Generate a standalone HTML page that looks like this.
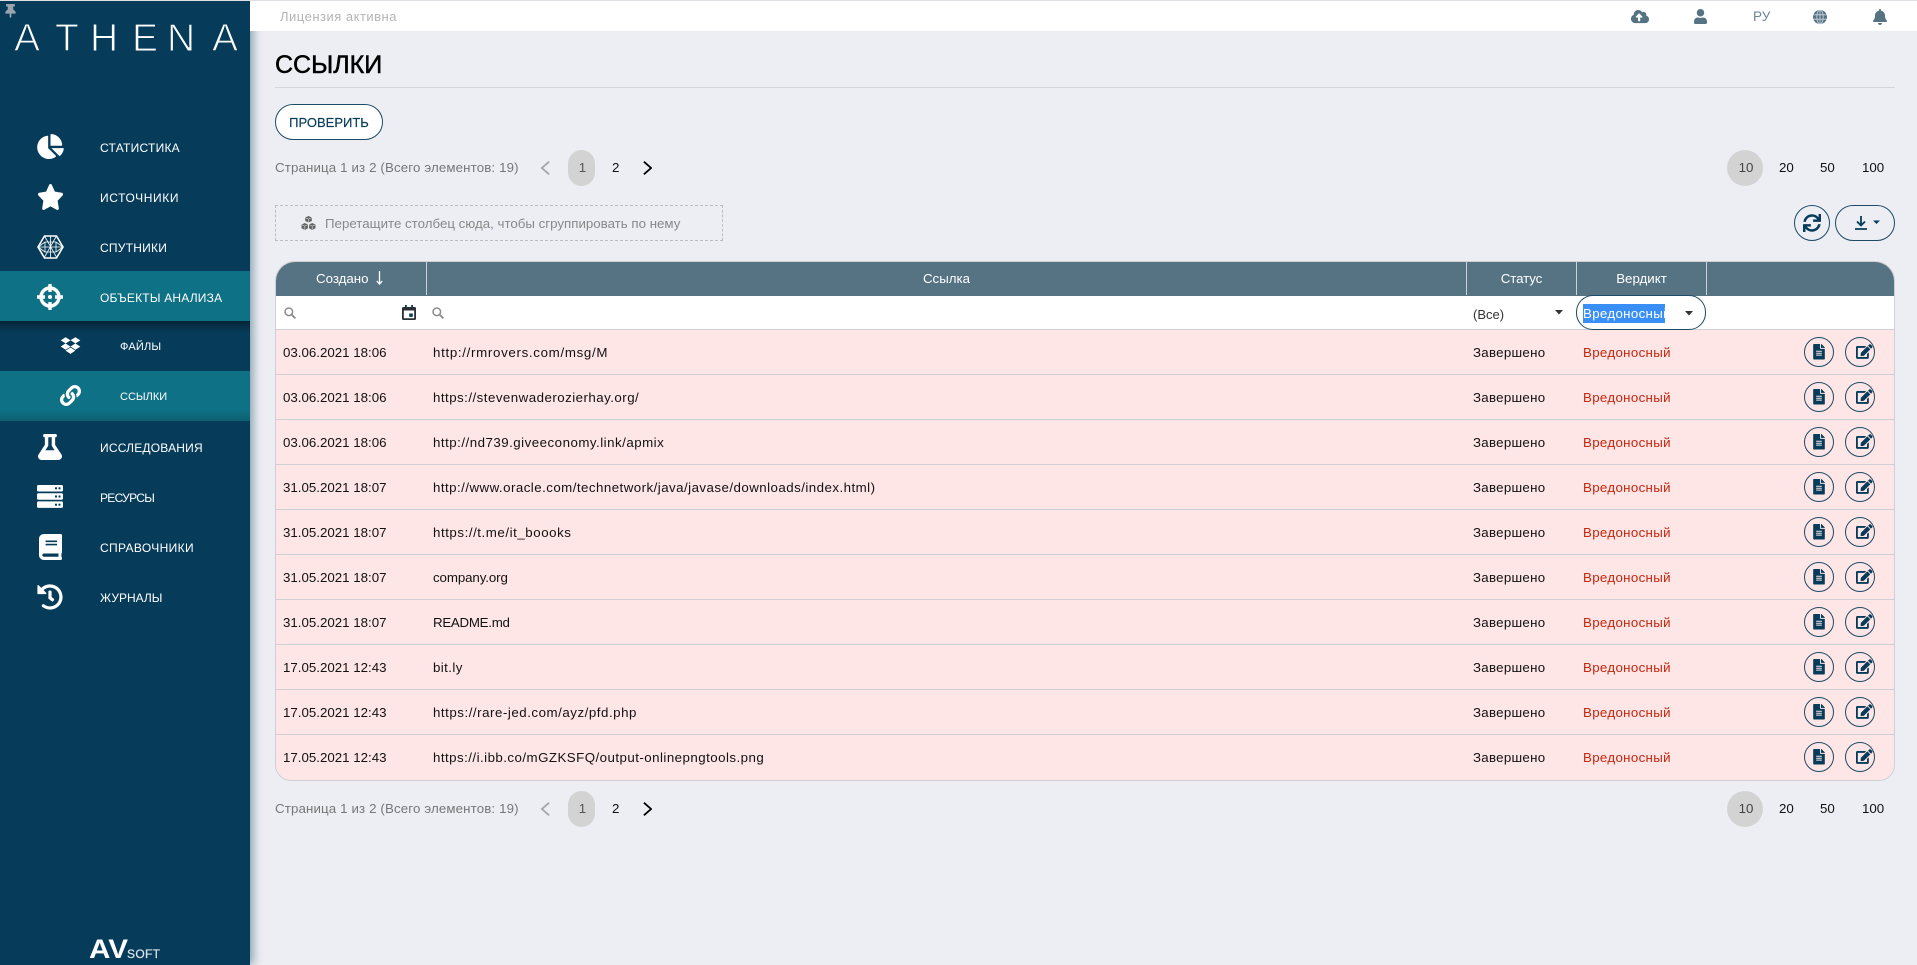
<!DOCTYPE html>
<html lang="ru"><head><meta charset="utf-8"><title>Ссылки</title>
<style>
*{box-sizing:border-box}
html,body{margin:0;padding:0;width:1917px;height:965px;overflow:hidden;background:#edeef3;font-family:"Liberation Sans",sans-serif;font-size:13.3px;color:#111}
.a{position:absolute;white-space:nowrap}
svg{display:block;position:absolute;overflow:visible}
#side{position:absolute;left:0;top:1px;width:250px;height:964px;background:#063c5a;box-shadow:3px 0 9px rgba(6,60,90,.45);z-index:1}
.nav{position:absolute;left:0;width:250px;height:50px;color:#fff;font-size:12px;line-height:52px}
.nav span{position:absolute;left:100px}
.nav.sub{font-size:11px}
.nav.sub span{left:120px}
#top{position:absolute;left:250px;top:1px;width:1667px;height:30px;background:#fff;z-index:2}
.pager{color:#777;letter-spacing:.13px}
.pill{position:absolute;background:#d3d3d3;border-radius:18px}
.row{position:absolute;left:276px;width:1618px;height:45px;background:#fee6e6;border-bottom:1px solid #cfd0d4;line-height:46px}
.row span{position:absolute;white-space:nowrap}
.d{left:7px}.u{left:157px;letter-spacing:.47px}.s{left:1197px;letter-spacing:.27px}.v{left:1307px;color:#c4260e;letter-spacing:.33px}
.b{position:absolute;top:7px;width:30px;height:30px;border:1px solid #1d4a66;border-radius:50%;background:transparent}
.b1{left:1528px}.b2{left:1569px}
.th{color:#fff;line-height:36px;text-align:center;top:261px;height:34px}
</style></head><body>
<svg width="0" height="0" style="position:absolute"><defs>
<symbol id="file" viewBox="0 0 384 512"><path d="M224 136V0H24C10.7 0 0 10.7 0 24v464c0 13.3 10.7 24 24 24h336c13.3 0 24-10.7 24-24V160H248c-13.2 0-24-10.8-24-24zm64 236c0 6.6-5.4 12-12 12H108c-6.6 0-12-5.4-12-12v-8c0-6.6 5.4-12 12-12h168c6.6 0 12 5.4 12 12v8zm0-64c0 6.6-5.4 12-12 12H108c-6.6 0-12-5.4-12-12v-8c0-6.6 5.4-12 12-12h168c6.6 0 12 5.4 12 12v8zm0-72v8c0 6.6-5.4 12-12 12H108c-6.6 0-12-5.4-12-12v-8c0-6.6 5.4-12 12-12h168c6.6 0 12 5.4 12 12zm96-114.1v6.1H256V0h6.1c6.4 0 12.5 2.5 17 7l97.9 98c4.5 4.5 7 10.6 7 16.9z"/></symbol>
<symbol id="edit" viewBox="0 0 576 512"><path d="M402.6 83.2l90.2 90.2c3.8 3.8 3.8 10 0 13.8L274.4 405.6l-92.8 10.3c-12.4 1.4-22.9-9.1-21.5-21.5l10.3-92.8L388.8 83.2c3.8-3.8 10-3.8 13.8 0zm162-22.9l-48.8-48.8c-15.2-15.2-39.9-15.2-55.2 0l-35.4 35.4c-3.8 3.8-3.8 10 0 13.8l90.2 90.2c3.8 3.8 10 3.8 13.8 0l35.4-35.4c15.2-15.3 15.2-40 0-55.2zM384 346.2V448H64V128h229.8c3.2 0 6.2-1.3 8.5-3.5l40-40c7.6-7.6 2.2-20.5-8.5-20.5H48C21.5 64 0 85.5 0 112v352c0 26.5 21.500 48 48 48h352c26.500 0 48-21.500 48-48V306.200c0-10.700-12.900-16-20.500-8.500l-40 40c-2.200 2.300-3.500 5.300-3.500 8.500z"/></symbol>
<symbol id="acts" viewBox="0 0 71 30"><use href="#file" x="9" y="7" width="12" height="15.500" fill="#063c5a"/><use href="#edit" x="52" y="7" width="16.500" height="15" fill="#063c5a"/></symbol>
<symbol id="search" viewBox="0 0 12 12"><circle cx="4.8" cy="4.8" r="3.8" fill="none" stroke="#8b8b8b" stroke-width="1.5"/><path d="M7.6 7.6L11.4 11.4" stroke="#8b8b8b" stroke-width="1.8"/></symbol>
<symbol id="chev" viewBox="0 0 10 16"><path d="M1 1l8 7-8 7" fill="none" stroke="currentColor" stroke-width="2"/></symbol>
</defs></svg>

<div style="position:absolute;left:0;top:0;width:1917px;height:1px;background:#dfdfe3;z-index:3"></div>

<div id="side"></div>
<div style="position:absolute;left:0;top:0;width:250px;height:965px;z-index:2">
  <svg style="left:5px;top:4px" width="11" height="14" viewBox="0 0 384 512" fill="#9aa5ad"><path d="M298.028 214.267L285.793 96H328c13.255 0 24-10.745 24-24V24c0-13.255-10.745-24-24-24H56C42.745 0 32 10.745 32 24v48c0 13.255 10.745 24 24 24h42.207L85.972 214.267C37.465 236.82 0 277.261 0 328c0 13.255 10.745 24 24 24h136v104.007c0 1.242.289 2.467.845 3.578l24 48c2.941 5.882 11.364 5.893 14.311 0l24-48a8.008 8.008 0 0 0 .845-3.578V352h136c13.255 0 24-10.745 24-24-.001-51.183-37.983-91.42-85.973-113.733z"/></svg>
  <svg style="left:0;top:0" width="250" height="60"><text x="14 55 90 132 167 212" y="51" font-family="Liberation Sans" font-size="39" fill="#fff" stroke="#063c5a" stroke-width="1.100">ATHENA</text></svg>

  <div style="position:absolute;left:0;top:271px;width:250px;height:50px;background:#0e7186"></div>
  <div style="position:absolute;left:0;top:321px;width:250px;height:12px;background:linear-gradient(#052438,#063c5a)"></div>
  <div style="position:absolute;left:0;top:371px;width:250px;height:50px;background:linear-gradient(#0e7186 78%,#0d5f6e)"></div>

  <div class="nav" style="top:122px"><span style="letter-spacing:.25px">СТАТИСТИКА</span></div>
  <svg style="left:37px;top:134px" width="27" height="25" viewBox="0 0 544 512" fill="#fff"><path d="M527.79 288H290.5l158.03 158.03c6.04 6.04 15.98 6.53 22.19.68 38.7-36.46 65.32-85.61 73.13-140.86 1.34-9.46-6.51-17.85-16.06-17.85zm-15.83-64.8C503.72 103.74 408.26 8.28 288.8.04 279.68-.59 272 7.1 272 16.24V240h223.77c9.14 0 16.82-7.68 16.19-16.8zM224 288V50.71c0-9.55-8.39-17.4-17.84-16.06C86.99 51.49-4.1 155.6.14 280.37 4.5 408.51 114.83 513.59 243.03 511.98c50.4-.63 96.97-16.87 135.26-44.03 7.9-5.6 8.42-17.23 1.57-24.08L224 288z"/></svg>

  <div class="nav" style="top:172px"><span style="letter-spacing:.6px">ИСТОЧНИКИ</span></div>
  <svg style="left:37px;top:184px" width="27" height="26" viewBox="0 0 576 512" preserveAspectRatio="none" fill="#fff"><path d="M259.3 17.8L194 150.2 47.9 171.5c-26.2 3.8-36.7 36.1-17.7 54.6l105.7 103-25 145.5c-4.5 26.3 23.2 46 46.4 33.7L288 439.6l130.7 68.7c23.2 12.2 50.9-7.4 46.4-33.7l-25-145.5 105.7-103c19-18.5 8.5-50.8-17.7-54.6L382 150.2 316.7 17.8c-11.7-23.6-45.6-23.9-57.4 0z"/></svg>

  <div class="nav" style="top:222px"><span style="letter-spacing:.25px">СПУТНИКИ</span></div>
  <svg style="left:37px;top:235px" width="27" height="24" viewBox="0 0 27 24" fill="none" stroke="#fff"><path d="M1 12L7.5 1h12L26 12l-6.500 11h-12z" stroke-width="1.6"/><path d="M7.500 1L20 23M19.500 1L7 23M1 12l7-5h11l7 5-7 5H8zM8 7v10M19 7v10M1 12h25M13.500 1v22" stroke-width=".8"/></svg>

  <div class="nav" style="top:272px"><span style="letter-spacing:.2px">ОБЪЕКТЫ АНАЛИЗА</span></div>
  <svg style="left:37px;top:284px" width="26" height="26" viewBox="0 0 26 26" fill="none" stroke="#fff"><circle cx="13" cy="13" r="9" stroke-width="3.400"/><circle cx="13" cy="13" r="2" fill="#fff" stroke="none"/><path d="M13 0v8M13 18v8M0 13h8M18 13h8" stroke-width="3.400"/></svg>

  <div class="nav sub" style="top:321px"><span style="letter-spacing:.2px">ФАЙЛЫ</span></div>
  <svg style="left:60px;top:336px" width="21" height="19" viewBox="0 0 528 512" fill="#fff"><path d="M264.4 116.3l-132 84.3 132 84.3-132 84.3L0 284.1l132.300-84.300L0 116.300 132.300 32l132.100 84.300zM131.600 395.700l132-84.300 132 84.300-132 84.300-132-84.300zm132.800-111.600l132-84.300-132-83.600L395.700 32 528 116.300l-132.300 84.300L528 284.800l-132.300 84.300-131.300-85z"/></svg>

  <div class="nav sub" style="top:371px"><span>ССЫЛКИ</span></div>
  <svg style="left:60px;top:385px" width="21" height="21" viewBox="0 0 512 512" fill="#fff"><path d="M326.612 185.391c59.747 59.809 58.927 155.698.36 214.59-.11.12-.24.25-.36.37l-67.2 67.2c-59.27 59.27-155.699 59.262-214.96 0-59.27-59.26-59.27-155.7 0-214.96l37.106-37.106c9.84-9.84 26.786-3.3 27.294 10.606.648 17.722 3.826 35.527 9.69 52.721 1.986 5.822.567 12.262-3.783 16.612l-13.087 13.087c-28.026 28.026-28.905 73.66-1.155 101.96 28.024 28.579 74.086 28.749 102.325.51l67.2-67.19c28.191-28.191 28.073-73.757 0-101.83-3.701-3.694-7.429-6.564-10.341-8.569a16.037 16.037 0 0 1-6.947-12.606c-.396-10.567 3.348-21.456 11.698-29.806l21.054-21.055c5.521-5.521 14.182-6.199 20.584-1.731a152.482 152.482 0 0 1 20.522 17.197zM467.547 44.449c-59.261-59.262-155.69-59.27-214.96 0l-67.2 67.2c-.12.12-.25.25-.36.37-58.566 58.892-59.387 154.781.36 214.59a152.454 152.454 0 0 0 20.521 17.196c6.402 4.468 15.064 3.789 20.584-1.731l21.054-21.055c8.35-8.35 12.094-19.239 11.698-29.806a16.037 16.037 0 0 0-6.947-12.606c-2.912-2.005-6.64-4.875-10.341-8.569-28.073-28.073-28.191-73.639 0-101.83l67.2-67.19c28.239-28.239 74.3-28.069 102.325.51 27.75 28.3 26.872 73.934-1.155 101.96l-13.087 13.087c-4.35 4.35-5.769 10.79-3.783 16.612 5.864 17.194 9.042 34.999 9.69 52.721.509 13.906 17.454 20.446 27.294 10.606l37.106-37.106c59.271-59.259 59.271-155.699.001-214.959z"/></svg>

  <div class="nav" style="top:422px"><span style="letter-spacing:.2px">ИССЛЕДОВАНИЯ</span></div>
  <svg style="left:38px;top:434px" width="24" height="26" viewBox="0 0 448 512" preserveAspectRatio="none" fill="#fff"><path d="M437.2 403.5L320 215V64h8c13.3 0 24-10.7 24-24V24c0-13.3-10.7-24-24-24H120c-13.3 0-24 10.700-24 24v16c0 13.300 10.700 24 24 24h8v151L10.800 403.500C-18.500 450.600 15.300 512 70.900 512h306.200c55.700 0 89.400-61.500 60.100-108.500zM137.900 320l48.200-77.600c3.700-5.200 5.800-11.600 5.800-18.400V64h64v160c0 6.900 2.200 13.200 5.800 18.400l48.200 77.600h-172z"/></svg>

  <div class="nav" style="top:472px"><span style="letter-spacing:-.7px">РЕСУРСЫ</span></div>
  <svg style="left:37px;top:485px" width="26" height="23" viewBox="0 0 26 23"><rect width="26" height="6.500" rx="1.500" fill="#fff"/><rect y="8.200" width="26" height="6.500" rx="1.500" fill="#fff"/><rect y="16.400" width="26" height="6.500" rx="1.500" fill="#fff"/><g fill="#063c5a"><rect x="18" y="2.300" width="2" height="2"/><rect x="21.500" y="2.300" width="2" height="2"/><rect x="18" y="10.500" width="2" height="2"/><rect x="21.500" y="10.500" width="2" height="2"/><rect x="18" y="18.700" width="2" height="2"/><rect x="21.500" y="18.700" width="2" height="2"/></g></svg>

  <div class="nav" style="top:522px"><span style="letter-spacing:.35px">СПРАВОЧНИКИ</span></div>
  <svg style="left:39px;top:534px" width="23" height="26" viewBox="0 0 448 512" preserveAspectRatio="none" fill="#fff"><path d="M448 360V24c0-13.300-10.700-24-24-24H96C43 0 0 43 0 96v320c0 53 43 96 96 96h328c13.300 0 24-10.700 24-24v-16c0-7.500-3.500-14.300-8.900-18.700-4.200-15.400-4.200-59.300 0-74.700 5.400-4.300 8.900-11.100 8.900-18.600zM128 134c0-3.300 2.700-6 6-6h212c3.300 0 6 2.700 6 6v20c0 3.300-2.700 6-6 6H134c-3.300 0-6-2.700-6-6v-20zm0 64c0-3.300 2.700-6 6-6h212c3.300 0 6 2.700 6 6v20c0 3.300-2.700 6-6 6H134c-3.300 0-6-2.700-6-6v-20zm253.400 250H96c-17.700 0-32-14.300-32-32 0-17.600 14.400-32 32-32h285.400c-1.900 17.100-1.900 46.900 0 64z"/></svg>

  <div class="nav" style="top:572px"><span>ЖУРНАЛЫ</span></div>
  <svg style="left:37px;top:584px" width="26" height="26" viewBox="0 0 512 512" fill="#fff"><path d="M504 255.531c.253 136.640-111.180 248.372-247.820 248.468-59.015.042-113.223-20.530-155.822-54.911-11.077-8.940-11.905-25.541-1.839-35.607l11.267-11.267c8.609-8.609 22.353-9.551 31.891-1.984C173.062 425.135 212.781 440 256 440c101.705 0 184-82.311 184-184 0-101.705-82.311-184-184-184-48.814 0-93.149 18.969-126.068 49.932l50.754 50.754c10.080 10.080 2.941 27.314-11.313 27.314H24c-8.837 0-16-7.163-16-16V38.627c0-14.254 17.234-21.393 27.314-11.314l49.372 49.372C129.209 34.136 189.552 8 256 8c136.810 0 247.747 110.780 248 247.531zm-180.912 78.784l9.823-12.630c8.138-10.463 6.253-25.542-4.210-33.679L288 256.349V152c0-13.255-10.745-24-24-24h-16c-13.255 0-24 10.745-24 24v135.651l65.409 50.874c10.463 8.137 25.541 6.253 33.679-4.210z"/></svg>

  <svg style="left:0;top:930px" width="250" height="35"><text x="89" y="28" font-family="Liberation Sans" font-size="27" font-weight="bold" fill="#fff" textLength="39" lengthAdjust="spacingAndGlyphs">AV</text><text x="127" y="28" font-family="Liberation Sans" font-size="12" fill="#dfe6eb" stroke="#dfe6eb" stroke-width=".2" textLength="33">SOFT</text></svg>
</div>

<div id="top">
  <div class="a" style="left:30px;top:0;line-height:31px;font-size:13px;color:#b4b4b4;letter-spacing:.5px">Лицензия активна</div>
  <svg style="left:1381px;top:8px" width="18" height="15" viewBox="0 0 640 512" preserveAspectRatio="none" fill="#567384"><path d="M537.600 226.600c4.100-10.700 6.400-22.400 6.400-34.600 0-53-43-96-96-96-19.700 0-38.100 6-53.300 16.200C367 64.200 315.300 32 256 32c-88.400 0-160 71.600-160 160 0 2.700.100 5.400.200 8.100C40.200 219.800 0 273.200 0 336c0 79.500 64.500 144 144 144h368c70.700 0 128-57.300 128-128 0-61.900-44-113.600-102.400-125.400zM393.400 288H328v112c0 8.800-7.200 16-16 16h-48c-8.800 0-16-7.200-16-16V288h-65.400c-14.300 0-21.400-17.200-11.300-27.300l105.400-105.400c6.200-6.200 16.400-6.200 22.600 0l105.400 105.400c10.100 10.100 2.900 27.300-11.300 27.300z"/></svg>
  <svg style="left:1444px;top:8px" width="13" height="15" viewBox="0 0 448 512" preserveAspectRatio="none" fill="#567384"><path d="M224 256c70.700 0 128-57.300 128-128S294.700 0 224 0 96 57.300 96 128s57.300 128 128 128zm89.600 32h-16.700c-22.200 10.200-46.900 16-72.900 16s-50.600-5.800-72.900-16h-16.700C60.200 288 0 348.200 0 422.400V464c0 26.500 21.500 48 48 48h352c26.500 0 48-21.500 48-48v-41.600c0-74.200-60.200-134.400-134.400-134.400z"/></svg>
  <div class="a" style="left:1503px;top:0;line-height:31px;font-size:13.5px;color:#6b8496">РУ</div>
  <svg style="left:1563px;top:9px" width="14" height="14" viewBox="0 0 14 14"><circle cx="7" cy="7" r="7" fill="#567384"/><path d="M0 4.800h14M0 9.200h14M7 0v14" stroke="#cfd8de" stroke-width=".8"/><ellipse cx="7" cy="7" rx="3.200" ry="7" fill="none" stroke="#cfd8de" stroke-width=".8"/></svg>
  <svg style="left:1623px;top:8px" width="14" height="16" viewBox="0 0 448 512" preserveAspectRatio="none" fill="#567384"><path d="M224 512c35.320 0 63.970-28.650 63.970-64H160.030c0 35.350 28.650 64 63.970 64zm215.390-149.710c-19.320-20.760-55.470-51.990-55.470-154.290 0-77.700-54.480-139.900-127.940-155.160V32c0-17.670-14.320-32-31.980-32s-31.980 14.330-31.980 32v20.840C118.560 68.100 64.080 130.300 64.080 208c0 102.300-36.150 133.530-55.470 154.290-6 6.450-8.660 14.160-8.610 21.710.110 16.400 12.980 32 32.100 32h383.800c19.120 0 32-15.600 32.100-32 .050-7.550-2.610-15.270-8.610-21.710z"/></svg>
</div>

<div class="a" style="left:275px;top:48px;font-size:25px;line-height:34px;color:#000;-webkit-text-stroke:.5px #000">ССЫЛКИ</div>
<div style="position:absolute;left:275px;top:87px;width:1620px;height:1px;background:#d4d5da"></div>

<div class="a" style="left:275px;top:104px;width:108px;height:36px;border:1px solid #1d4a66;border-radius:18px;background:#fff;text-align:center;line-height:35px;font-size:13px;color:#063c5a;-webkit-text-stroke:.2px #063c5a">ПРОВЕРИТЬ</div>

<!-- pager top -->
<div class="a pager" style="left:275px;top:160px;line-height:16px">Страница 1 из 2 (Всего элементов: 19)</div>
<svg style="left:541px;top:160px;color:#a5a5a5" width="9" height="16" viewBox="0 0 10 16"><path d="M9 1L1 8l8 7" fill="none" stroke="currentColor" stroke-width="2"/></svg>
<div class="pill" style="left:568px;top:150px;width:27px;height:36px"></div>
<div class="a" style="left:569px;width:27px;text-align:center;top:160px;line-height:16px;color:#555">1</div>
<div class="a" style="left:612px;top:160px;line-height:16px">2</div>
<svg style="left:643px;top:160px;color:#000" width="9" height="16"><use href="#chev" width="9" height="16"/></svg>

<div class="pill" style="left:1727px;top:150px;width:36px;height:36px"></div>
<div class="a" style="left:1728px;width:36px;text-align:center;top:160px;line-height:16px;color:#444">10</div>
<div class="a" style="left:1779px;top:160px;line-height:16px">20</div>
<div class="a" style="left:1820px;top:160px;line-height:16px">50</div>
<div class="a" style="left:1862px;top:160px;line-height:16px">100</div>

<!-- group panel -->
<div class="a" style="left:275px;top:205px;width:448px;height:36px;border:1px dashed #bdbdc2"></div>
<svg style="left:301px;top:216px" width="15" height="14" viewBox="0 0 15 14" fill="#666"><path d="M7.500 0l3.300 1.500v3.500L7.500 6.500 4.200 5V1.500zM3.800 7l3.200 1.500v3.700L3.800 14 .5 12.200V8.500zM11.200 7l3.300 1.500v3.700L11.200 14 8 12.200V8.500z"/><path d="M4.500 1.800l3 1.300 3-1.300M7.500 3.100v3.300M.8 8.800l3 1.300 3-1.300M3.800 10.100v3.600M8.200 8.800l3 1.300 3-1.300M11.200 10.100v3.600" fill="none" stroke="#edeef3" stroke-width=".5"/></svg>
<div class="a" style="left:325px;top:216px;line-height:16px;color:#888">Перетащите столбец сюда, чтобы сгруппировать по нему</div>

<!-- toolbar right -->
<div class="a" style="left:1794px;top:205px;width:36px;height:36px;border:1px solid #1d4a66;border-radius:50%"></div>
<svg style="left:1803px;top:214px" width="18" height="18" viewBox="0 0 512 512" fill="#063c5a"><path d="M440.650 12.570l4 82.770A247.160 247.160 0 0 0 255.830 8C134.730 8 33.910 94.920 12.290 209.820A12 12 0 0 0 24.090 224h49.050a12 12 0 0 0 11.670-9.260 175.910 175.910 0 0 1 317-56.940l-101.460-4.860a12 12 0 0 0-12.570 12v47.410a12 12 0 0 0 12 12H500a12 12 0 0 0 12-12V12a12 12 0 0 0-12-12h-47.370a12 12 0 0 0-11.980 12.570zM255.830 432a175.610 175.610 0 0 1-146-77.800l101.800 4.870a12 12 0 0 0 12.570-12v-47.400a12 12 0 0 0-12-12H12a12 12 0 0 0-12 12V500a12 12 0 0 0 12 12h47.350a12 12 0 0 0 12-12.600l-4.150-82.570A247.170 247.170 0 0 0 255.830 504c121.110 0 221.930-86.920 243.550-201.820a12 12 0 0 0-11.800-14.180h-49.050a12 12 0 0 0-11.670 9.260A175.860 175.860 0 0 1 255.830 432z"/></svg>
<div class="a" style="left:1835px;top:205px;width:60px;height:36px;border:1px solid #1d4a66;border-radius:18px"></div>
<svg style="left:1855px;top:216px" width="28" height="14" viewBox="0 0 28 14" fill="none" stroke="#063c5a" stroke-width="1.800"><path d="M6 0v9M2 5.500L6 9.500l4-4M0 13h12"/><path d="M18 4.500h7L21.500 8z" fill="#063c5a" stroke="none"/></svg>

<!-- table -->
<div style="position:absolute;left:275px;top:261px;width:1620px;height:520px;border:1px solid #cfd0d4;border-radius:20px 20px 16px 16px;overflow:hidden;background:#fee6e6">
  <div style="position:absolute;left:0;top:-1px;width:100%;height:35px;background:#567384"></div>
  <div style="position:absolute;left:0;top:34px;width:100%;height:34px;background:#fff;border-bottom:1px solid #cfd0d4"></div>
</div>
<div style="position:absolute;left:426px;top:261px;width:1px;height:34px;background:#c9d2d8"></div>
<div style="position:absolute;left:1466px;top:261px;width:1px;height:34px;background:#c9d2d8"></div>
<div style="position:absolute;left:1576px;top:261px;width:1px;height:34px;background:#c9d2d8"></div>
<div style="position:absolute;left:1706px;top:261px;width:1px;height:34px;background:#c9d2d8"></div>

<div class="a th" style="left:316px">Создано</div>
<svg style="left:376px;top:271px" width="7" height="14" viewBox="0 0 7 14" fill="none" stroke="#fff" stroke-width="1.300"><path d="M3.500 0v13M.8 10l2.700 3 2.700-3"/></svg>
<div class="a th" style="left:427px;width:1039px">Ссылка</div>
<div class="a th" style="left:1467px;width:109px;letter-spacing:-.1px">Статус</div>
<div class="a th" style="left:1577px;width:129px">Вердикт</div>

<!-- filter row -->
<svg style="left:284px;top:307px" width="12" height="12"><use href="#search" width="12" height="12"/></svg>
<svg style="left:402px;top:305px" width="14" height="15" viewBox="0 0 14 15"><path d="M1.500 2h11A1.500 1.500 0 0 1 14 3.500v10a1.500 1.500 0 0 1-1.500 1.500h-11A1.500 1.500 0 0 1 0 13.500v-10A1.500 1.500 0 0 1 1.500 2zM1.800 5.500v7.700h10.400V5.500z" fill="#2b2f33" fill-rule="evenodd"/><path d="M3 0h1.800v3H3zM9.200 0H11v3H9.200zM7.200 8.500h3.600v3.400H7.200z" fill="#063c5a"/></svg>
<svg style="left:432px;top:307px" width="12" height="12"><use href="#search" width="12" height="12"/></svg>
<div class="a" style="left:1473px;top:307px;line-height:16px;font-size:13px;color:#333">(Все)</div>
<svg style="left:1555px;top:310px" width="8" height="5"><path d="M0 0h8L4 4.500z" fill="#333"/></svg>
<div class="a" style="left:1576px;top:295px;width:130px;height:35px;border:1px solid #1d4a66;border-radius:17px;background:#fff"></div>
<div class="a" style="left:1583px;top:304px;width:82px;height:19px;background:#3a8ff7;overflow:hidden;color:#fff;line-height:20px;letter-spacing:.33px">Вредоносный</div>
<svg style="left:1685px;top:311px" width="8" height="5"><path d="M0 0h8L4 4.500z" fill="#333"/></svg>

<!-- rows -->
<div class="row" style="top:330px"><span class="d">03.06.2021 18:06</span><span class="u" style="letter-spacing:.68px">http://rmrovers.com/msg/M</span><span class="s">Завершено</span><span class="v">Вредоносный</span><div class="b b1"></div><div class="b b2"></div><svg style="left:1528px;top:7px" width="71" height="30"><use href="#acts" width="71" height="30"/></svg></div>
<div class="row" style="top:375px"><span class="d">03.06.2021 18:06</span><span class="u">https://stevenwaderozierhay.org/</span><span class="s">Завершено</span><span class="v">Вредоносный</span><div class="b b1"></div><div class="b b2"></div><svg style="left:1528px;top:7px" width="71" height="30"><use href="#acts" width="71" height="30"/></svg></div>
<div class="row" style="top:420px"><span class="d">03.06.2021 18:06</span><span class="u" style="letter-spacing:.49px">http://nd739.giveeconomy.link/apmix</span><span class="s">Завершено</span><span class="v">Вредоносный</span><div class="b b1"></div><div class="b b2"></div><svg style="left:1528px;top:7px" width="71" height="30"><use href="#acts" width="71" height="30"/></svg></div>
<div class="row" style="top:465px"><span class="d">31.05.2021 18:07</span><span class="u" style="letter-spacing:.46px">http://www.oracle.com/technetwork/java/javase/downloads/index.html)</span><span class="s">Завершено</span><span class="v">Вредоносный</span><div class="b b1"></div><div class="b b2"></div><svg style="left:1528px;top:7px" width="71" height="30"><use href="#acts" width="71" height="30"/></svg></div>
<div class="row" style="top:510px"><span class="d">31.05.2021 18:07</span><span class="u" style="letter-spacing:.55px">https://t.me/it_boooks</span><span class="s">Завершено</span><span class="v">Вредоносный</span><div class="b b1"></div><div class="b b2"></div><svg style="left:1528px;top:7px" width="71" height="30"><use href="#acts" width="71" height="30"/></svg></div>
<div class="row" style="top:555px"><span class="d">31.05.2021 18:07</span><span class="u" style="letter-spacing:-.1px">company.org</span><span class="s">Завершено</span><span class="v">Вредоносный</span><div class="b b1"></div><div class="b b2"></div><svg style="left:1528px;top:7px" width="71" height="30"><use href="#acts" width="71" height="30"/></svg></div>
<div class="row" style="top:600px"><span class="d">31.05.2021 18:07</span><span class="u" style="letter-spacing:-.27px">README.md</span><span class="s">Завершено</span><span class="v">Вредоносный</span><div class="b b1"></div><div class="b b2"></div><svg style="left:1528px;top:7px" width="71" height="30"><use href="#acts" width="71" height="30"/></svg></div>
<div class="row" style="top:645px"><span class="d">17.05.2021 12:43</span><span class="u" style="letter-spacing:.4px">bit.ly</span><span class="s">Завершено</span><span class="v">Вредоносный</span><div class="b b1"></div><div class="b b2"></div><svg style="left:1528px;top:7px" width="71" height="30"><use href="#acts" width="71" height="30"/></svg></div>
<div class="row" style="top:690px"><span class="d">17.05.2021 12:43</span><span class="u" style="letter-spacing:.53px">https://rare-jed.com/ayz/pfd.php</span><span class="s">Завершено</span><span class="v">Вредоносный</span><div class="b b1"></div><div class="b b2"></div><svg style="left:1528px;top:7px" width="71" height="30"><use href="#acts" width="71" height="30"/></svg></div>
<div class="row" style="top:735px;background:transparent;border-bottom:0"><span class="d">17.05.2021 12:43</span><span class="u" style="letter-spacing:.46px">https://i.ibb.co/mGZKSFQ/output-onlinepngtools.png</span><span class="s">Завершено</span><span class="v">Вредоносный</span><div class="b b1"></div><div class="b b2"></div><svg style="left:1528px;top:7px" width="71" height="30"><use href="#acts" width="71" height="30"/></svg></div>

<!-- pager bottom -->
<div class="a pager" style="left:275px;top:801px;line-height:16px">Страница 1 из 2 (Всего элементов: 19)</div>
<svg style="left:541px;top:801px;color:#a5a5a5" width="9" height="16" viewBox="0 0 10 16"><path d="M9 1L1 8l8 7" fill="none" stroke="currentColor" stroke-width="2"/></svg>
<div class="pill" style="left:568px;top:791px;width:27px;height:36px"></div>
<div class="a" style="left:569px;width:27px;text-align:center;top:801px;line-height:16px;color:#555">1</div>
<div class="a" style="left:612px;top:801px;line-height:16px">2</div>
<svg style="left:643px;top:801px;color:#000" width="9" height="16"><use href="#chev" width="9" height="16"/></svg>
<div class="pill" style="left:1727px;top:791px;width:36px;height:36px"></div>
<div class="a" style="left:1728px;width:36px;text-align:center;top:801px;line-height:16px;color:#444">10</div>
<div class="a" style="left:1779px;top:801px;line-height:16px">20</div>
<div class="a" style="left:1820px;top:801px;line-height:16px">50</div>
<div class="a" style="left:1862px;top:801px;line-height:16px">100</div>
</body></html>
